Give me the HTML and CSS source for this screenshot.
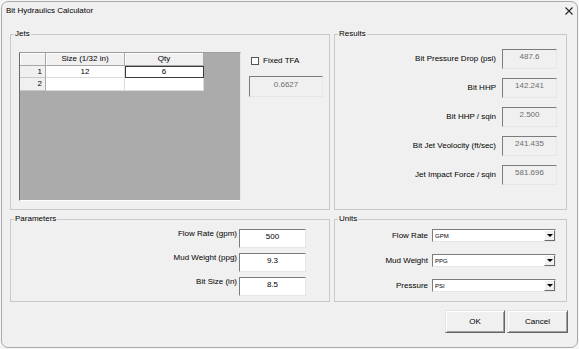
FILE: index.html
```html
<!DOCTYPE html>
<html>
<head>
<meta charset="utf-8">
<title>Bit Hydraulics Calculator</title>
<link rel="stylesheet" href="styles.css">
</head>
<body>
<div class="dialog">
  <div class="titlebar">
    <span class="title">Bit Hydraulics Calculator</span>
    <svg class="close" width="8" height="8" viewBox="0 0 8 8"><path d="M0.5 0.5L7.5 7.5M7.5 0.5L0.5 7.5" stroke="#262626" stroke-width="1.1" fill="none"/></svg>
  </div>
  <div class="content">
    <div class="row row-top">
      <div class="group jets">
        <div class="legend">Jets</div>
        <div class="jets-body">
          <div class="grid">
            <div class="table">
              <div class="cell hd corner"></div>
              <div class="cell hd">Size (1/32 in)</div>
              <div class="cell hd">Qty</div>
              <div class="cell rh">1</div>
              <div class="cell">12</div>
              <div class="cell focus">6</div>
              <div class="cell rh">2</div>
              <div class="cell"></div>
              <div class="cell"></div>
            </div>
          </div>
          <div class="tfa">
            <div class="check"><span class="box"></span><span>Fixed TFA</span></div>
            <div class="ro tfa-val">0.6627</div>
          </div>
        </div>
      </div>
      <div class="group results">
        <div class="legend">Results</div>
        <div class="results-body">
          <div class="rrow"><span class="lbl">Bit Pressure Drop (psi)</span><div class="ro rval">487.6</div></div>
          <div class="rrow"><span class="lbl">Bit HHP</span><div class="ro rval">142.241</div></div>
          <div class="rrow"><span class="lbl">Bit HHP / sqin</span><div class="ro rval">2.500</div></div>
          <div class="rrow"><span class="lbl">Bit Jet Veolocity (ft/sec)</span><div class="ro rval">241.435</div></div>
          <div class="rrow"><span class="lbl">Jet Impact Force / sqin</span><div class="ro rval">581.696</div></div>
        </div>
      </div>
    </div>
    <div class="row row-bottom">
      <div class="group params">
        <div class="legend">Parameters</div>
        <div class="params-body">
          <div class="prow"><span class="lbl">Flow Rate (gpm)</span><div class="input">500</div></div>
          <div class="prow"><span class="lbl">Mud Weight (ppg)</span><div class="input">9.3</div></div>
          <div class="prow"><span class="lbl">Bit Size (in)</span><div class="input">8.5</div></div>
        </div>
      </div>
      <div class="group units">
        <div class="legend">Units</div>
        <div class="units-body">
          <div class="urow"><span class="lbl">Flow Rate</span><div class="select"><span>GPM</span><span class="dd"><span class="arrow"></span></span></div></div>
          <div class="urow"><span class="lbl">Mud Weight</span><div class="select"><span>PPG</span><span class="dd"><span class="arrow"></span></span></div></div>
          <div class="urow"><span class="lbl">Pressure</span><div class="select"><span>PSI</span><span class="dd"><span class="arrow"></span></span></div></div>
        </div>
      </div>
    </div>
    <div class="buttons">
      <div class="btn ok">OK</div>
      <div class="btn cancel">Cancel</div>
    </div>
  </div>
</div>
</body>
</html>
```

FILE: styles.css
```css
* { box-sizing: border-box; }
html, body { margin: 0; padding: 0; }
body {
  width: 579px;
  height: 349px;
  overflow: hidden;
  background: #f5f5f5;
  font-family: "Liberation Sans", Arial, sans-serif;
  font-size: 8px;
  color: #000;
}
.dialog {
  margin: 1px;
  width: 577px;
  height: 347px;
  border: 1px solid #a9a9a9;
  border-radius: 7px;
  background: #f0f0f0;
  display: flex;
  flex-direction: column;
  overflow: hidden;
}
.titlebar {
  height: 18px;
  flex: none;
  display: flex;
  align-items: center;
  justify-content: space-between;
  padding: 0 4px;
}
.title { font-size: 8px; color: #000; line-height: 10px; }
.close { display: block; }
.content {
  padding: 14px 10px 0 8px;
  display: flex;
  flex-direction: column;
}
.row { display: flex; gap: 4px; }
.row-top { height: 176px; }
.row-bottom { height: 83px; margin-top: 9px; }
.jets, .params { width: 320px; flex: none; }
.results, .units { flex: 1; }
.group {
  border: 1px solid #c9c9c9;
}
.legend {
  width: fit-content;
  margin: -6px 0 -4px 3px;
  padding: 0 1px;
  line-height: 10px;
  background: #f0f0f0;
  color: #000;
}
.lbl { line-height: 10px; color: #000; white-space: nowrap; }

/* Jets */
.jets-body { display: flex; padding: 17px 0 0 8px; gap: 8px; }
.grid {
  width: 222px;
  height: 149px;
  background: #ababab;
  border-style: solid;
  border-width: 1px;
  border-color: #9c9c9c #e8e8e8 #ffffff #6a6a6a;
}
.table {
  display: grid;
  grid-template-columns: 26px 79px 79px;
  grid-template-rows: 13px 12px 13px;
  width: 184px;
}
.cell {
  background: #fff;
  border-right: 1px solid #dcdcdc;
  border-bottom: 1px solid #dcdcdc;
  text-align: center;
  line-height: 11px;
  color: #000;
}
.cell.hd {
  background: #f0f0f0;
  border-right-color: #a8a8a8;
  border-bottom-color: #a8a8a8;
  box-shadow: inset 1px 1px #fff;
  line-height: 12px;
}
.cell.rh {
  background: #f0f0f0;
  border-right-color: #a8a8a8;
  border-bottom-color: #c8c8c8;
  text-align: right;
  padding-right: 3px;
}
.cell.focus { outline: 1px solid #3a3a3a; outline-offset: -1px; }
.tfa { display: flex; flex-direction: column; }
.check {
  display: flex;
  align-items: center;
  gap: 4px;
  margin: 4px 0 0 2px;
  line-height: 10px;
}
.box {
  width: 8px;
  height: 8px;
  border: 1px solid #555;
  background: #fff;
}
.ro {
  border: 1px solid;
  border-color: #7c7c7c #e6e6e6 #e6e6e6 #7c7c7c;
  background: #f0f0f0;
  color: #6d6d6d;
  text-align: center;
  line-height: 10px;
}
.tfa-val { width: 74px; height: 21px; margin-top: 10px; padding-top: 3px; }

/* Results */
.results-body {
  display: flex;
  flex-direction: column;
  gap: 9px;
  padding: 14px 9px 0 0;
}
.rrow { display: flex; justify-content: flex-end; align-items: center; gap: 6px; height: 20px; }
.rval { width: 55px; height: 20px; padding-top: 2px; }

/* Parameters */
.params-body {
  display: flex;
  flex-direction: column;
  gap: 5px;
  padding: 9px 23px 0 0;
}
.prow { display: flex; justify-content: flex-end; gap: 2px; }
.input {
  width: 67px;
  height: 19px;
  background: #fff;
  border: 1px solid;
  border-color: #7c7c7c #e6e6e6 #e6e6e6 #7c7c7c;
  text-align: center;
  line-height: 12px;
  padding-top: 1px;
  color: #000;
}

/* Units */
.units-body {
  display: flex;
  flex-direction: column;
  gap: 12px;
  padding: 9px 10px 0 0;
}
.urow { display: flex; justify-content: flex-end; align-items: center; gap: 4px; }
.select {
  width: 124px;
  height: 13px;
  background: #fff;
  border: 1px solid;
  border-color: #7c7c7c #e6e6e6 #e6e6e6 #7c7c7c;
  display: flex;
  align-items: center;
  padding-left: 2px;
  font-size: 6px;
  color: #000;
}
.dd {
  margin-left: auto;
  width: 11px;
  height: 11px;
  background: #f0f0f0;
  border: 1px solid;
  border-color: #fff #6a6a6a #6a6a6a #fff;
  display: flex;
  align-items: center;
  justify-content: center;
}
.arrow {
  width: 0;
  height: 0;
  border-left: 3px solid transparent;
  border-right: 3px solid transparent;
  border-top: 3px solid #000;
}

/* Buttons */
.buttons {
  display: flex;
  justify-content: flex-end;
  gap: 2px;
  margin-top: 8px;
  margin-right: -1px;
}
.btn {
  width: 60px;
  height: 23px;
  border: 1px solid;
  border-color: #e3e3e3 #646464 #646464 #e3e3e3;
  box-shadow: inset 1px 1px #fff, inset -1px -1px #a0a0a0;
  background: #f0f0f0;
  display: flex;
  align-items: center;
  justify-content: center;
  color: #000;
}
.btn.cancel { width: 61px; }
```
